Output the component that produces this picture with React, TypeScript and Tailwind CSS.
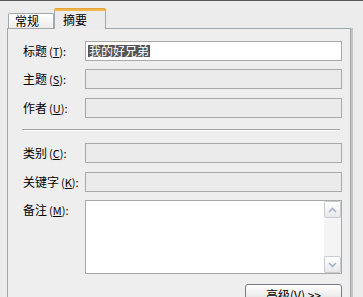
import React from "react"

const font = { fontFamily: '"Noto Sans CJK SC", "Noto Sans", sans-serif' }

function Label({ text, k }: { text: string; k: string }) {
  return (
    <div className="w-[63px] shrink-0 pl-[1px] text-[12px] leading-[20px] text-black whitespace-nowrap">
      {text}
      <span className="text-[11px] ml-[2px]">
        (<span className="underline">{k}</span>):
      </span>
    </div>
  )
}

function Field({ label, k, value, disabled }: { label: string; k: string; value?: string; disabled?: boolean }) {
  return (
    <div className="flex items-center">
      <Label text={label} k={k} />
      <div
        className={`h-[20px] flex-1 border border-[#a9a9a9] flex items-center px-[2px] ${
          disabled ? "bg-[#ebebeb]" : "bg-white"
        }`}
      >
        {value && (
          <span className="bg-[#555555] text-white text-[12px] leading-[12px] px-[1px] py-[0px]">{value}</span>
        )}
      </div>
    </div>
  )
}

function Chevron({ up }: { up?: boolean }) {
  return (
    <svg width="9" height="6" viewBox="0 0 9 6">
      <path
        d={up ? "M1 5 L4.5 1.5 L8 5" : "M1 1 L4.5 4.5 L8 1"}
        fill="none"
        stroke="#a6b4c8"
        strokeWidth="1.6"
      />
    </svg>
  )
}

export default function App() {
  return (
    <div className="w-[363px] h-[297px] overflow-hidden bg-[#ececec] border-t border-[#555]" style={font}>
      {/* tabs */}
      <div className="flex items-end pl-[8px] pt-[7px] h-[27px]">
        <div className="h-[15px] w-[46px] border border-b-0 border-[#a0a8ab] bg-gradient-to-b from-white to-[#ececec] rounded-t-[2px] text-[12px] leading-[14px] pl-[6px] text-black">
          常规
        </div>
        <div className="relative h-[20px] w-[52px] border border-b-0 border-[#a0a8ab] border-t-0 bg-[#ececec] -mb-[1px] z-10 text-[12px] leading-[14px] pl-[8px] pt-[4px] text-black">
          <div className="absolute -top-[1px] -left-[1px] -right-[1px] h-[3px] bg-[#f3b64a] border-t border-[#e4a23a] rounded-t-[2px]" />
          摘要
        </div>
      </div>
      {/* panel */}
      <div className="flex">
        <div className="ml-[7px] w-[344px] h-[280px] border border-[#a0a8ab] bg-[#eeeeee] pl-[14px] pr-[8px] pt-[12px]">
          <div className="flex flex-col">
            <Field label="标题" k="T" value="我的好兄弟" />
            <div className="h-[8px]" />
            <Field label="主题" k="S" disabled />
            <div className="h-[9px]" />
            <Field label="作者" k="U" disabled />
            <div className="h-[11px]" />
            <div className="h-[2px] border-t border-[#a3a3a3] border-b border-b-white mr-[2px]" />
            <div className="h-[12px]" />
            <Field label="类别" k="C" disabled />
            <div className="h-[9px]" />
            <Field label="关键字" k="K" disabled />
            <div className="h-[8px]" />
            <div className="flex">
              <Label text="备注" k="M" />
              <div className="h-[74px] flex-1 border border-[#a9a9a9] bg-white flex justify-end">
                <div className="w-[17px] flex flex-col justify-between bg-[#f4f4f4]">
                  <div className="h-[17px] border border-[#c8ccd2] rounded-[2px] bg-gradient-to-b from-white to-[#e6e8ec] flex items-center justify-center">
                    <Chevron up />
                  </div>
                  <div className="h-[17px] border border-[#c8ccd2] rounded-[2px] bg-gradient-to-b from-white to-[#e6e8ec] flex items-center justify-center">
                    <Chevron />
                  </div>
                </div>
              </div>
            </div>
            <div className="flex justify-end mt-[10px]">
              <div className="w-[97px] h-[22px] border border-[#7a7e84] rounded-[3px] bg-gradient-to-b from-white to-[#dcdcdc] text-[12px] leading-[20px] text-center text-black">
                高级(<span className="underline">V</span>) &gt;&gt;
              </div>
            </div>
          </div>
        </div>
        <div className="w-[2px] h-[280px] bg-[#c4c4c4]" />
      </div>
    </div>
  )
}
